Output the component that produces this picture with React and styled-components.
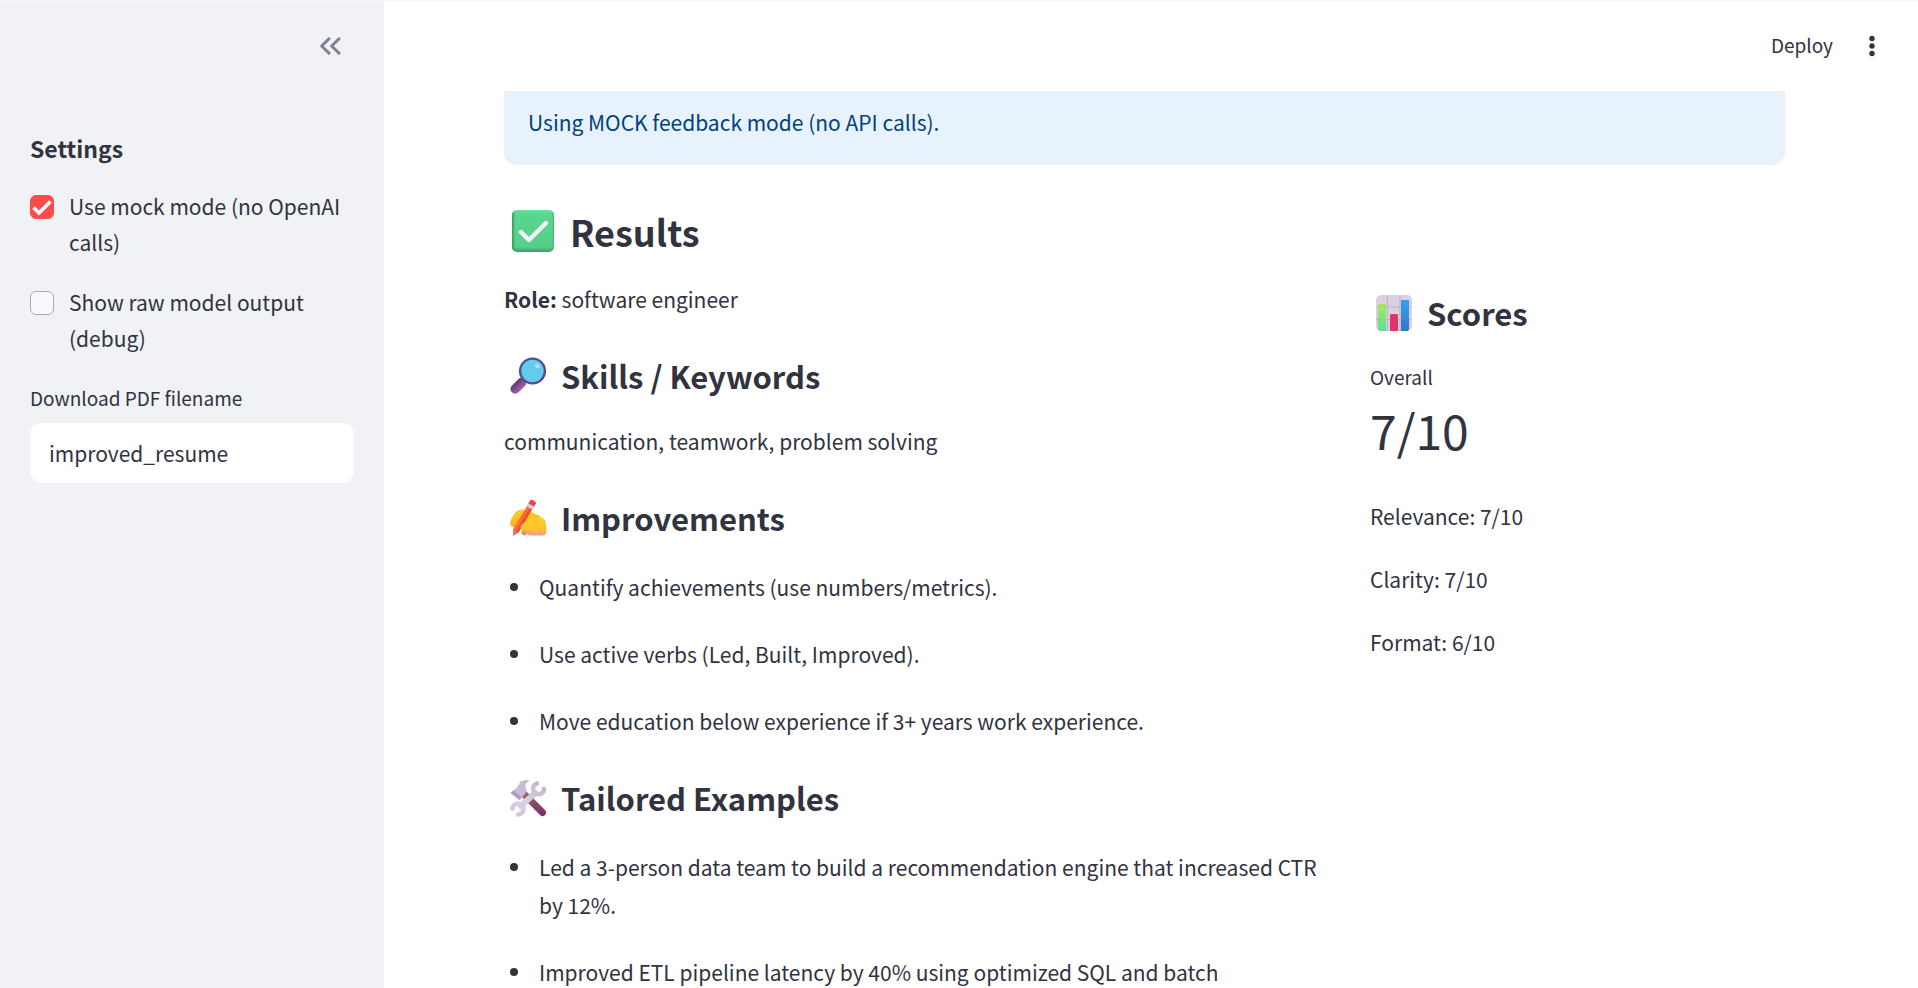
import React from "react";
import styled, { createGlobalStyle } from "styled-components";

const Global = createGlobalStyle`
  *, *::before, *::after { box-sizing: border-box; }
  body {
    margin: 0;
    background: #fff;
    color: #31333f;
    font-family: "Noto Sans CJK SC", "Noto Sans", sans-serif;
    font-size: 21px;
    line-height: 38px;
  }
  h1, h2, h3, p, ul { margin: 0; padding: 0; }
  button, input { font: inherit; color: inherit; }
`;

const Shell = styled.div`
  display: flex;
  height: 100vh;
  overflow: hidden;
  border-top: 1px solid #fff3f1;
`;

const Sidebar = styled.aside`
  flex: 0 0 384px;
  padding: 0 30px;
  background: #f0f2f6;
`;

const SidebarTop = styled.div`
  display: flex;
  justify-content: flex-end;
  align-items: center;
  height: 90px;
`;

const IconButton = styled.button`
  display: flex;
  align-items: center;
  justify-content: center;
  width: 48px;
  height: 48px;
  padding: 0;
  border: 0;
  background: none;
  color: ${(p) => p.$color || "#31333f"};
`;

const SidebarTitle = styled.h2`
  padding: 39px 0 22px;
  font-size: 23px;
  line-height: 36px;
  font-weight: 700;
`;

const Settings = styled.form`
  display: flex;
  flex-direction: column;
  gap: 24px;
`;

const CheckRow = styled.label`
  display: flex;
  align-items: flex-start;
  gap: 15px;
  line-height: 36px;
`;

const CheckBox = styled.input`
  appearance: none;
  flex: 0 0 24px;
  height: 24px;
  margin: 7px 0 0;
  border: 1px solid #a9abb2;
  border-radius: 6px;
  background: #f9f9fb;

  &:checked {
    border-color: #ff4b4b;
    background: #ff4b4b
      url("data:image/svg+xml,%3Csvg xmlns='http://www.w3.org/2000/svg' viewBox='0 0 22 22'%3E%3Cpath d='M2.5 11.5 8 17 19.5 5.5' fill='none' stroke='%23fff' stroke-width='3.6'/%3E%3C/svg%3E")
      center / 22px 22px no-repeat;
  }
`;

const Field = styled.label`
  display: flex;
  flex-direction: column;
  gap: 9px;
  padding-top: 2px;
  font-size: 19px;
  line-height: 32px;
`;

const TextInput = styled.input`
  width: 100%;
  height: 60px;
  padding: 0 19px;
  border: 0;
  border-radius: 12px;
  background: #fff;
  font-size: 21px;
`;

const Main = styled.main`
  flex: 1;
  min-width: 0;
`;

const Header = styled.header`
  display: flex;
  justify-content: flex-end;
  align-items: center;
  gap: 15px;
  height: 90px;
  padding-right: 22px;
`;

const DeployButton = styled.button`
  padding: 0 0 2px;
  border: 0;
  background: none;
  font-size: 19px;
  line-height: 32px;
`;

const Content = styled.div`
  padding: 0 133px 0 120px;
`;

const Alert = styled.div`
  padding: 13px 24px 25px;
  border-radius: 0 0 12px 12px;
  background: #e8f2fc;
  color: #004280;
  line-height: 36px;
`;

const PageTitle = styled.h1`
  display: flex;
  align-items: center;
  gap: 15px;
  margin: 41px 0 24px;
  padding-left: 7px;
  font-size: 36px;
  line-height: 50px;
  font-weight: 700;
`;

const Columns = styled.div`
  display: grid;
  grid-template-columns: 2fr 1fr;
  gap: 36px;
`;

const Column = styled.section`
  min-width: 0;
`;

const SectionTitle = styled.h2`
  display: flex;
  align-items: center;
  gap: 14px;
  margin: ${(p) => (p.$first ? 11 : 36)}px 0 24px;
  padding-left: 5px;
  font-size: 31px;
  line-height: 44px;
  font-weight: 700;
`;

const List = styled.ul`
  display: flex;
  flex-direction: column;
  gap: 29px;
  margin-top: 28px;
  padding-left: 6px;
  list-style: none;
`;

const Item = styled.li`
  display: flex;
  gap: 21px;

  &::before {
    content: "";
    flex: 0 0 8px;
    height: 8px;
    margin-top: 15px;
    border-radius: 50%;
    background: currentColor;
  }
`;

const MetricLabel = styled.p`
  padding-top: 2px;
  font-size: 19px;
  line-height: 32px;
`;

const MetricValue = styled.p`
  margin: 4px 0 36px;
  font-size: 48px;
  line-height: 64px;
`;

const Scores = styled.div`
  display: flex;
  flex-direction: column;
  gap: 25px;
`;

const CollapseIcon = () => (
  <svg width="22" height="18" viewBox="0 0 22 18" fill="none" stroke="currentColor" strokeWidth="3" strokeLinecap="round" strokeLinejoin="round">
    <path d="M10 1.8 2.6 9 10 16.2M20 1.8 12.6 9 20 16.2" />
  </svg>
);

const KebabIcon = () => (
  <svg width="6" height="22" viewBox="0 0 6 22" fill="currentColor">
    <circle cx="3" cy="3.5" r="2.7" />
    <circle cx="3" cy="11" r="2.7" />
    <circle cx="3" cy="18.5" r="2.7" />
  </svg>
);

const CheckMark = () => (
  <svg width="44" height="44" viewBox="0 0 44 44" aria-hidden="true">
    <defs>
      <linearGradient id="cm" x1="0" y1="0" x2="0" y2="1">
        <stop offset="0" stopColor="#62e398" />
        <stop offset=".12" stopColor="#57d68e" />
        <stop offset=".88" stopColor="#56cf89" />
        <stop offset="1" stopColor="#3a9c68" />
      </linearGradient>
      <linearGradient id="cmSide" x1="0" y1="0" x2="1" y2="0">
        <stop offset="0" stopColor="#35905f" stopOpacity=".9" />
        <stop offset=".08" stopColor="#35905f" stopOpacity="0" />
        <stop offset=".94" stopColor="#43a978" stopOpacity="0" />
        <stop offset="1" stopColor="#43a978" stopOpacity=".6" />
      </linearGradient>
    </defs>
    <rect x="1" y="1" width="42" height="42" rx="5" fill="url(#cm)" />
    <rect x="1" y="1" width="42" height="42" rx="5" fill="url(#cmSide)" />
    <path d="M10 23 18 31 35 14" fill="none" stroke="#f6f0fb" strokeWidth="4.4" strokeLinecap="round" strokeLinejoin="round" />
  </svg>
);

const Magnifier = () => (
  <svg width="38" height="38" viewBox="0 0 38 38" aria-hidden="true">
    <defs>
      <linearGradient id="mgHandle" x1="0" y1="0" x2="1" y2="1">
        <stop offset="0" stopColor="#5f3a78" />
        <stop offset="1" stopColor="#a45fa6" />
      </linearGradient>
      <linearGradient id="mgRing" x1="0" y1="0" x2="1" y2="1">
        <stop offset="0" stopColor="#3e5c98" />
        <stop offset="1" stopColor="#6a3d86" />
      </linearGradient>
    </defs>
    <path d="M6.2 32 12.6 25.6" stroke="url(#mgHandle)" strokeWidth="9.5" strokeLinecap="round" />
    <circle cx="23.500" cy="14" r="12.400" fill="#62cdeb" stroke="url(#mgRing)" strokeWidth="2.400" />
    <circle cx="28.500" cy="9" r="2.300" fill="#b4dff8" />
  </svg>
);

const WritingHand = () => (
  <svg width="38" height="38" viewBox="0 0 38 38" aria-hidden="true">
    <defs>
      <linearGradient id="wh" x1="0" y1="0" x2="0" y2="1">
        <stop offset="0" stopColor="#ffd02a" />
        <stop offset=".7" stopColor="#fbc02c" />
        <stop offset="1" stopColor="#ee8fa8" />
      </linearGradient>
      <linearGradient id="whBack" x1="0" y1="0" x2="0" y2="1">
        <stop offset="0" stopColor="#fcd02a" />
        <stop offset="1" stopColor="#f6a51c" />
      </linearGradient>
    </defs>
    <path d="M2 27C0 24 2 20 5 15.500 7.500 11 10 10 14 10.500l8 2.500 8 3.500 6 5V32l-14 1-7-8-6 1-3 2.500z" fill="url(#whBack)" />
    <path d="M12 34.500 14 29l5 3-2 4-2.500.5z" fill="#f18c61" />
    <path d="M21.500 1 27 4 9.500 33.500 4 37 4 30.500z" fill="#fc6c3c" />
    <path d="M24.500 2.500 27 4 9.500 33.500 7 32z" fill="#e9552f" />
    <path d="M21.500 1Q24 0 27 4L25 7.500 19.500 4.500z" fill="#ef4350" />
    <path d="m19.500 4.500 5.500 3-1.700 3-5.500-3z" fill="#d9c6ef" />
    <path d="m4 31.500 4.500 2.700L4 37z" fill="#e2768a" />
    <path d="M11.500 28c1-3 4-5 9-7 5-3 10-4 14-1 3 3 3 8 3 12s-2 4.500-5 4.500H21c-3 0-3.500-3-4.500-5-2 1-5 0-5-3.500z" fill="url(#wh)" />
  </svg>
);

const Tools = () => (
  <svg width="38" height="38" viewBox="0 0 38 38" aria-hidden="true">
    <defs>
      <linearGradient id="tlHandle" x1="0" y1="0" x2="1" y2="1">
        <stop offset="0" stopColor="#96685f" />
        <stop offset="1" stopColor="#7b3468" />
      </linearGradient>
      <linearGradient id="tlSteel" gradientUnits="userSpaceOnUse" x1="34" y1="4" x2="6" y2="35">
        <stop offset="0" stopColor="#bdb4c9" />
        <stop offset=".6" stopColor="#d9cfe9" />
        <stop offset="1" stopColor="#cfc4e2" />
      </linearGradient>
    </defs>
    <path d="m15 15 18.500 18.500" stroke="url(#tlHandle)" strokeWidth="7" strokeLinecap="round" />
    <path d="M1.500 14 8 8.500l3.500-6Q16 0 21 1.500q-5 2.500-4.500 7l1.500 4-7.500 8.500z" fill="#c6bdd6" />
    <path d="m1.500 14 3-2.500 8.500 7-2.500 2.500z" fill="#aaa0bb" />
    <g fill="none" stroke="url(#tlSteel)" strokeLinecap="round">
      <path d="M26 14 12 27" strokeWidth="6" />
      <path d="M28 4.500a5.500 5.500 0 1 0 7 5.500" strokeWidth="4.600" />
      <path d="M3.500 29.500a5.500 5.500 0 1 1 5.800 6" strokeWidth="4.600" />
    </g>
  </svg>
);

const BarChart = () => (
  <svg width="38" height="38" viewBox="0 0 38 38" aria-hidden="true">
    <defs>
      <linearGradient id="bcGreen" x1="0" y1="0" x2="0" y2="1">
        <stop offset="0" stopColor="#a6e65e" />
        <stop offset="1" stopColor="#5fe09a" />
      </linearGradient>
      <linearGradient id="bcBlue" x1="0" y1="0" x2="0" y2="1">
        <stop offset="0" stopColor="#379fee" />
        <stop offset="1" stopColor="#3377c9" />
      </linearGradient>
    </defs>
    <rect x="1" y="1" width="36" height="36" rx="5" fill="#d9d1e1" />
    <path d="M12.500 1v36M25 1v36M1 13h36M1 25.500h36" stroke="#bdb4c6" strokeWidth="1.200" />
    <path d="M3 11q0-1 1-1h6q1 0 1 1v26H5q-2 0-2-2z" fill="url(#bcGreen)" />
    <rect x="15" y="20" width="8" height="17" rx="1" fill="#e2316f" />
    <path d="M26 7q0-1 1-1h6q1 0 1 1v28q0 2-2 2h-6z" fill="url(#bcBlue)" />
  </svg>
);

const improvements = [
  "Quantify achievements (use numbers/metrics).",
  "Use active verbs (Led, Built, Improved).",
  "Move education below experience if 3+ years work experience.",
];

const examples = [
  "Led a 3-person data team to build a recommendation engine that increased CTR by 12%.",
  "Improved ETL pipeline latency by 40% using optimized SQL and batch",
];

const scores = ["Relevance: 7/10", "Clarity: 7/10", "Format: 6/10"];

const BulletList = ({ items }) => (
  <List>
    {items.map((item) => (
      <Item key={item}>{item}</Item>
    ))}
  </List>
);

export default function App() {
  return (
    <>
      <Global />
      <Shell>
        <Sidebar>
          <SidebarTop>
            <IconButton type="button" aria-label="Collapse sidebar" $color="#808391">
              <CollapseIcon />
            </IconButton>
          </SidebarTop>
          <SidebarTitle>Settings</SidebarTitle>
          <Settings>
            <CheckRow>
              <CheckBox type="checkbox" defaultChecked />
              <span>Use mock mode (no OpenAI calls)</span>
            </CheckRow>
            <CheckRow>
              <CheckBox type="checkbox" />
              <span>Show raw model output (debug)</span>
            </CheckRow>
            <Field>
              Download PDF filename
              <TextInput type="text" defaultValue="improved_resume" />
            </Field>
          </Settings>
        </Sidebar>
        <Main>
          <Header>
            <DeployButton type="button">Deploy</DeployButton>
            <IconButton type="button" aria-label="Main menu">
              <KebabIcon />
            </IconButton>
          </Header>
          <Content>
            <Alert role="status">Using MOCK feedback mode (no API calls).</Alert>
            <PageTitle>
              <CheckMark />
              Results
            </PageTitle>
            <Columns>
              <Column>
                <p>
                  <strong>Role:</strong> software engineer
                </p>
                <SectionTitle>
                  <Magnifier />
                  Skills / Keywords
                </SectionTitle>
                <p>communication, teamwork, problem solving</p>
                <SectionTitle>
                  <WritingHand />
                  Improvements
                </SectionTitle>
                <BulletList items={improvements} />
                <SectionTitle>
                  <Tools />
                  Tailored Examples
                </SectionTitle>
                <BulletList items={examples} />
              </Column>
              <Column>
                <SectionTitle $first>
                  <BarChart />
                  Scores
                </SectionTitle>
                <MetricLabel>Overall</MetricLabel>
                <MetricValue>7/10</MetricValue>
                <Scores>
                  {scores.map((score) => (
                    <p key={score}>{score}</p>
                  ))}
                </Scores>
              </Column>
            </Columns>
          </Content>
        </Main>
      </Shell>
    </>
  );
}
